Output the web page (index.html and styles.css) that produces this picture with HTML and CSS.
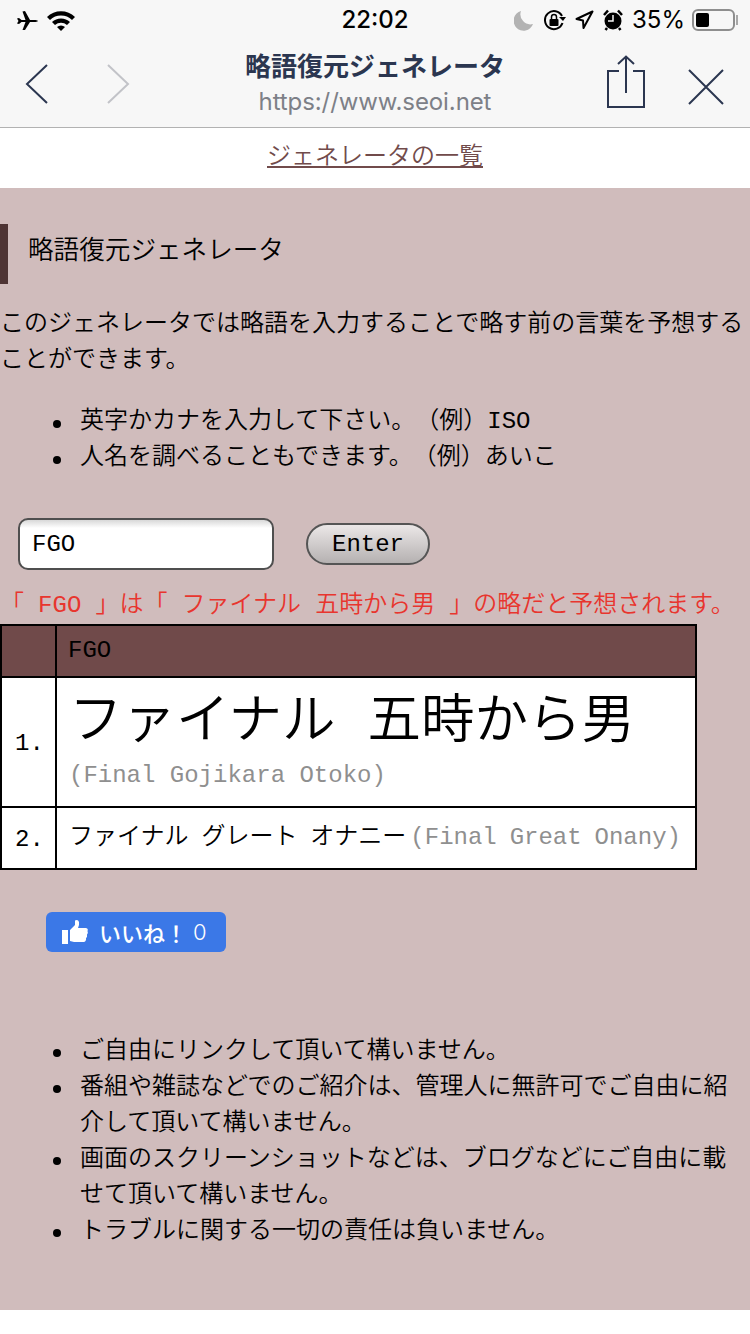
FILE: index.html
```html
<!DOCTYPE html>
<html lang="ja">

<head>
    <meta charset="UTF-8">
    <meta name="viewport" content="width=device-width, initial-scale=1.0">
    <title>略語復元ジェネレータ</title>
    <link rel="stylesheet" href="styles.css">
</head>

<body>
    <!-- Browser chrome -->
    <header class="chrome">
        <div class="status-bar">
            <div class="status-left">
                <svg class="ic-plane" width="23" height="21" viewBox="0 0 23 21"><path d="M1 8.5 L3 8 L5.5 10 L9.5 10 L6.5 1.5 L9 1 L14 10 L19.5 10 Q22 10.5 22 11 Q22 11.5 19.5 12 L14 12 L9 20 L6.5 20 L9.5 12 L5.5 12 L3 14 L1 13.5 L2.5 11 Z" fill="#000"/></svg>
                <svg width="30" height="22" viewBox="0 0 30 22"><path d="M1 8 A20 20 0 0 1 29 8 L26 11 A16 16 0 0 0 4 11 Z M6 13 A13 13 0 0 1 24 13 L21 16 A9 9 0 0 0 9 16 Z M11 18 A6 6 0 0 1 19 18 L15 22 Z" fill="#000"/></svg>
            </div>
            <div class="status-time">22:02</div>
            <div class="status-right">
                <svg width="20" height="22" viewBox="0 0 20 22"><path d="M7 2 A10 10 0 1 0 19 15 A10 10 0 0 1 7 2 Z" fill="#b3b3b3"/></svg>
                <svg width="23" height="22" viewBox="0 0 23 22"><path d="M19 7 A9 9 0 1 0 19.5 14" fill="none" stroke="#000" stroke-width="2"/><path d="M16 8 L23 8 L20 12 Z" fill="#000"/><rect x="6.5" y="10" width="9" height="7" rx="1" fill="#000"/><path d="M8.5 10 V8 A2.5 2.5 0 0 1 13.5 8 V10" fill="none" stroke="#000" stroke-width="1.5"/></svg>
                <svg width="19" height="20" viewBox="0 0 19 20"><path d="M17.5 1.5 L8.5 18 L8 10.5 L1.5 9 Z" fill="none" stroke="#000" stroke-width="2" stroke-linejoin="round"/></svg>
                <svg width="20" height="22" viewBox="0 0 20 22"><circle cx="10" cy="12" r="8.5" fill="#000"/><path d="M10 6 V12 H5" fill="none" stroke="#f7f7f7" stroke-width="1.5"/><path d="M1 6 L5 1.5 M19 6 L15 1.5 M4 19 L2.5 21 M16 19 L17.5 21" stroke="#000" stroke-width="2.5"/></svg>
                <span class="status-pct">35%</span>
                <div class="battery"><div class="battery-fill"></div></div>
            </div>
        </div>
        <div class="nav-bar">
            <div class="nav-arrows">
                <svg width="24" height="40" viewBox="0 0 24 40"><path d="M22 1 L2 20 L22 39" fill="none" stroke="#2b3650" stroke-width="2"/></svg>
                <svg width="24" height="40" viewBox="0 0 24 40"><path d="M2 1 L22 20 L2 39" fill="none" stroke="#c2c3c8" stroke-width="2"/></svg>
            </div>
            <div class="nav-title">
                <div class="nav-name">略語復元ジェネレータ</div>
                <div class="nav-url">https://www.seoi.net</div>
            </div>
            <div class="nav-actions">
                <svg width="40" height="53" viewBox="0 0 40 53"><path d="M13 16 H2 V52 H38 V16 H27 M20 38 V2 M12 9 L20 1.5 L28 9" fill="none" stroke="#2b3650" stroke-width="2"/></svg>
                <svg width="36" height="36" viewBox="0 0 36 36"><path d="M1 1 L35 35 M35 1 L1 35" fill="none" stroke="#2b3650" stroke-width="2"/></svg>
            </div>
        </div>
    </header>

    <div class="top-link"><a href="#">ジェネレータの一覧</a></div>

    <main class="content">
        <h1 class="page-title">略語復元ジェネレータ</h1>
        <p class="intro">このジェネレータでは略語を入力することで略す前の言葉を予想することができます。</p>
        <ul class="hints">
            <li>英字かカナを入力して下さい。（例）ISO</li>
            <li>人名を調べることもできます。（例）あいこ</li>
        </ul>

        <form class="search-form">
            <input class="search-input" type="text" value="FGO">
            <button class="search-button" type="button">Enter</button>
        </form>

        <p class="result-msg">「 FGO 」は「 ファイナル 五時から男 」の略だと予想されます。</p>

        <table class="result-table">
            <thead>
                <tr>
                    <th class="col-num"></th>
                    <th class="col-word">FGO</th>
                </tr>
            </thead>
            <tbody>
                <tr class="row-top">
                    <td>1.</td>
                    <td>
                        <div class="word-big">ファイナル 五時から男</div>
                        <div class="roman">(Final Gojikara Otoko)</div>
                    </td>
                </tr>
                <tr class="row-second">
                    <td>2.</td>
                    <td>ファイナル グレート オナニー<span class="roman">(Final Great Onany)</span></td>
                </tr>
            </tbody>
        </table>

        <button class="like-button" type="button">
            <svg width="28" height="26" viewBox="0 0 28 26"><path d="M1 11 H7 V25 H1 Z M9 11 L14 6 V1.5 Q17 0 18 3 Q18.5 6 17 9 H25 Q27.5 9.5 26.5 12 Q27.5 14 26 15.5 Q26.5 18 25 19 Q25.5 22 23 23 H13 L9 22 Z" fill="#fff"/></svg>
            <span class="like-label">いいね！</span>
            <span class="like-count">0</span>
        </button>

        <ul class="notes">
            <li>ご自由にリンクして頂いて構いません。</li>
            <li>番組や雑誌などでのご紹介は、管理人に無許可でご自由に紹介して頂いて構いません。</li>
            <li>画面のスクリーンショットなどは、ブログなどにご自由に載せて頂いて構いません。</li>
            <li>トラブルに関する一切の責任は負いません。</li>
        </ul>
    </main>
</body>

</html>
```

FILE: styles.css
```css
/* Page base */
body {
    margin: 0;
    background-color: white;
    color: black;
    font-family: "Liberation Mono", "Noto Sans CJK JP", monospace;
    font-size: 24px;
    line-height: 36px;
    text-spacing-trim: space-all;
}

/* Browser chrome */
.chrome {
    height: 127px;
    background-color: #f7f7f7;
    border-bottom: 1px solid #b2b2b2;
    font-family: Inter, "Noto Sans CJK JP", sans-serif;
}

.status-bar {
    height: 40px;
    display: flex;
    align-items: center;
    justify-content: space-between;
    position: relative;
    padding: 0 15px 0 16px;
}

.status-left {
    display: flex;
    align-items: center;
    gap: 7px;
}

.status-time {
    position: absolute;
    left: 0;
    right: 0;
    text-align: center;
    font-size: 24px;
    font-weight: 500;
    line-height: 40px;
}

.status-right {
    display: flex;
    align-items: center;
    gap: 9px;
}

.status-pct {
    font-size: 24px;
    line-height: 40px;
    margin-right: -2px;
}

.battery {
    width: 43px;
    height: 22px;
    border: 2px solid #8e8e8e;
    border-radius: 6px;
    padding: 2px;
    box-sizing: border-box;
    position: relative;
}

.battery::after {
    content: "";
    position: absolute;
    right: -5px;
    top: 4px;
    width: 2px;
    height: 10px;
    background-color: #a8a8a8;
}

.battery-fill {
    width: 13px;
    height: 14px;
    background-color: black;
    border-radius: 2px;
}

.nav-bar {
    height: 87px;
    display: flex;
    align-items: flex-start;
    justify-content: space-between;
    position: relative;
}

.nav-arrows {
    display: flex;
    gap: 57px;
    margin: 24px 0 0 25px;
}

.nav-title {
    position: absolute;
    left: 0;
    right: 0;
    top: 10px;
    text-align: center;
}

.nav-name {
    font-size: 26px;
    font-weight: 700;
    line-height: 34px;
    color: #2b3650;
}

.nav-url {
    font-size: 24px;
    line-height: 36px;
    color: #7d8087;
    letter-spacing: -0.1px;
}

.nav-actions {
    display: flex;
    align-items: flex-start;
    gap: 42px;
    margin: 15px 26px 0 0;
}

.nav-actions svg:last-child {
    margin-top: 14px;
}

/* Link under the chrome */
.top-link {
    height: 60px;
    line-height: 51px;
    text-align: center;
    font-family: "Noto Sans CJK JP", sans-serif;
    font-weight: 350;
}

.top-link a {
    color: #714b4b;
}

/* Main area */
.content {
    background-color: #d0bcbc;
    height: 1122px;
    padding-top: 36px;
    box-sizing: border-box;
    overflow: hidden;
    font-weight: 350;
}

.page-title {
    margin: 0;
    height: 60px;
    line-height: 58px;
    padding-left: 20px;
    border-left: 8px solid #4e3434;
    font-size: 25.6px;
    font-weight: 350;
}

.intro {
    margin: 23px 0 0;
}

.hints,
.notes {
    list-style: none;
    margin: 0;
    padding-left: 80px;
}

.hints li,
.notes li {
    position: relative;
}

/* Bullets sit further out and are bigger than the browser default */
.hints li::before,
.notes li::before {
    content: "";
    position: absolute;
    left: -27px;
    top: 16px;
    width: 8px;
    height: 8px;
    border-radius: 50%;
    background-color: black;
}

.notes li::before {
    top: 15px;
}

.hints {
    margin-top: 25px;
}

.hints li {
    height: 36px;
}

/* Search form */
.search-form {
    display: flex;
    align-items: center;
    gap: 32px;
    margin: 42px 0 0 18px;
}

.search-input {
    width: 256px;
    height: 52px;
    box-sizing: border-box;
    padding: 0 12px;
    border: 2px solid #4f4f4f;
    border-radius: 10px;
    background: linear-gradient(#d8d8d8, white 8px);
    font: 24px "Liberation Mono", monospace;
    color: black;
}

.search-button {
    width: 124px;
    height: 42px;
    padding: 0;
    border: 2px solid #555;
    border-radius: 21px;
    background: linear-gradient(#ebe7e7, #b5b1b1);
    font: 24px "Liberation Mono", monospace;
    color: black;
}

.result-msg {
    margin: 18px 0 0;
    color: #e8352e;
    white-space: nowrap;
    height: 33px;
    line-height: 36px;
    word-spacing: -0.3px;
}

/* Results */
.result-table {
    width: 697px;
    border-collapse: collapse;
    border: 2px solid black;
    margin: 3px 0 0;
    table-layout: fixed;
}

.result-table th,
.result-table td {
    border: 2px solid black;
    padding: 0 12px;
    font-weight: 350;
    text-align: left;
    box-sizing: border-box;
}

.result-table th {
    height: 52px;
    background-color: #704a4a;
    padding-left: 11px;
}

.col-num {
    width: 55px;
}

.result-table td {
    background-color: white;
}

.result-table td:first-child {
    padding: 3px 0 0 13px;
}

.row-top td {
    height: 130px;
}

.row-second td {
    height: 62px;
    white-space: nowrap;
    word-spacing: -1.5px;
}

.word-big {
    font-size: 53.5px;
    height: 78px;
    line-height: 88px;
    white-space: nowrap;
}

.roman {
    color: #8f8f8f;
}

.row-second .roman {
    margin-left: 4px;
}

.row-top .roman {
    line-height: 36px;
    padding-bottom: 10px;
}

/* Like button */
.like-button {
    display: flex;
    align-items: center;
    width: 180px;
    height: 40px;
    margin: 42px 0 0 46px;
    padding: 0 0 0 15px;
    border: none;
    border-radius: 6px;
    background-color: #3b78e7;
    color: white;
    font-family: "Noto Sans CJK JP", sans-serif;
    font-size: 22px;
}

.like-label {
    margin-left: 10px;
    font-weight: 500;
}

.like-count {
    margin-left: 6px;
    font-family: Inter, sans-serif;
    font-weight: 300;
}

.notes {
    margin-top: 82px;
}
```
